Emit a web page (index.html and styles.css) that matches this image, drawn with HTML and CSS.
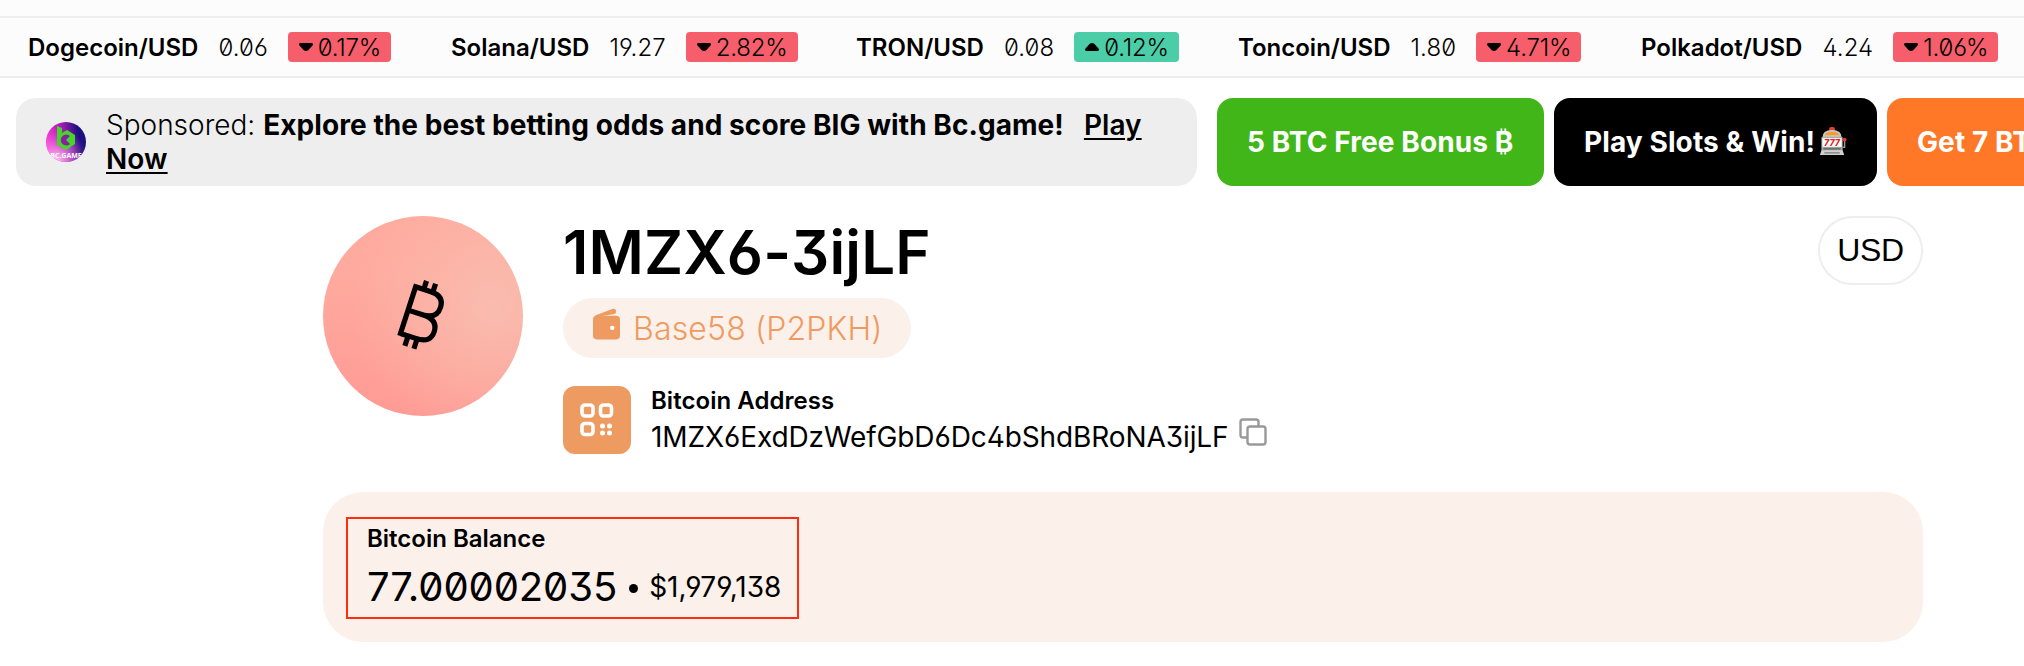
FILE: index.html
```html
<!DOCTYPE html>
<html lang="en">
<head>
<meta charset="utf-8">
<title>Bitcoin Address</title>
<link rel="stylesheet" href="styles.css">
</head>
<body>
<div class="topstrip"></div>
<div class="ticker">
  <div class="pair"><b>Dogecoin/USD</b><span class="price">0.06</span><span class="chg down"><svg viewBox="0 0 14 8"><path d="M2 0h10q3 0 1.500 2.500L9.500 7q-2.500 2-5 0L.5 2.500Q-1 0 2 0z"/></svg>0.17%</span></div>
  <div class="pair"><b>Solana/USD</b><span class="price">19.27</span><span class="chg down"><svg viewBox="0 0 14 8"><path d="M2 0h10q3 0 1.500 2.500L9.500 7q-2.500 2-5 0L.5 2.500Q-1 0 2 0z"/></svg>2.82%</span></div>
  <div class="pair"><b>TRON/USD</b><span class="price">0.08</span><span class="chg up"><svg viewBox="0 0 14 8"><path d="M2 8h10q3 0 1.500-2.500L9.500 1q-2.500-2-5 0L.5 5.500Q-1 8 2 8z"/></svg>0.12%</span></div>
  <div class="pair"><b>Toncoin/USD</b><span class="price">1.80</span><span class="chg down"><svg viewBox="0 0 14 8"><path d="M2 0h10q3 0 1.500 2.500L9.500 7q-2.500 2-5 0L.5 2.500Q-1 0 2 0z"/></svg>4.71%</span></div>
  <div class="pair"><b>Polkadot/USD</b><span class="price">4.24</span><span class="chg down"><svg viewBox="0 0 14 8"><path d="M2 0h10q3 0 1.500 2.500L9.500 7q-2.500 2-5 0L.5 2.500Q-1 0 2 0z"/></svg>1.06%</span></div>
</div>
<div class="promos">
  <div class="sponsor">
    <svg class="bc" viewBox="0 0 40 40">
      <defs>
        <linearGradient id="g" x1="0" y1=".35" x2="1" y2=".2"><stop offset="0" stop-color="#ff2fd6"/><stop offset=".5" stop-color="#8a1aa8"/><stop offset=".8" stop-color="#1d0f80"/></linearGradient>
        <radialGradient id="h" cx=".25" cy=".95" r=".8"><stop offset="0" stop-color="#ffc4f2"/><stop offset="1" stop-color="#e060d8" stop-opacity="0"/></radialGradient>
        <clipPath id="c"><circle cx="20" cy="20" r="20"/></clipPath>
      </defs>
      <g clip-path="url(#c)"><path fill="url(#g)" d="M0 0h40v40H0z"/><path fill="url(#h)" d="M0 0h40v40H0z"/>
      <path fill="#45d62a" d="M11 4l5 2v5l5-3 8 5v9l-9 6-9-5z"/><path fill="#8a1fa6" d="M24 14a5.500 5.500 0 1 0 0 8l-4-4z"/>
      <text class="bct" x="20" y="36" text-anchor="middle">BC.GAME</text></g>
    </svg>
    <p>Sponsored: <b>Explore the best betting odds and score BIG with Bc.game!</b><b class="play"><u>Play Now</u></b></p>
  </div>
  <div class="btn green">5 BTC Free Bonus ₿</div>
  <div class="btn black">Play Slots &amp; Win!
    <svg class="slot" viewBox="0 0 28 30">
      <rect x="10" y="0" width="6" height="5" rx="2" fill="#e2402f"/>
      <path d="M3 11Q3 3 13 3t10 8z" fill="#c9c9c5"/><path d="M5 8.500Q7 5 13 5t8 3.500z" fill="#f59a2d"/>
      <rect x="2" y="10" width="22" height="15" rx="1.500" fill="#a9aaa8"/><rect x="3" y="11.500" width="20" height="9" fill="#fff"/>
      <text class="sevens" x="13" y="19.500" text-anchor="middle">777</text>
      <rect x="4" y="21.500" width="18" height="2" fill="#6e706e"/><path d="M2 24h22l1.500 5H.5z" fill="#cfd0ce"/><path d="M5 26h16v1.500H5z" fill="#888"/>
      <path d="M24 21h2v-8" fill="none" stroke="#999" stroke-width="1.500"/><circle cx="26" cy="13" r="2" fill="#e23b30"/>
    </svg>
  </div>
  <div class="btn orange">Get 7 BTC</div>
</div>
<main>
  <section class="head">
    <div class="avatar">
      <svg viewBox="0 0 60 80"><g transform="rotate(18 30 40)"><path d="M14 12V66M14 14.500H30Q44 14.500 44 26.500T30 39H14M30 39Q45.500 39 45.500 51.500T30 63.500H14M22.500 5.500V14M32 5.500V14M22 64V74M31.500 64V74"/></g></svg>
    </div>
    <div class="info">
      <h1>1MZX6-3ijLF</h1>
      <div class="type">
        <svg viewBox="0 0 28 32"><path d="M3 7L20 .5Q24-.5 24 3.500q0 2-3 2.500L10 7.500H24q4 0 4 4V28q0 4-4 4H4q-4 0-4-4V12Q0 8 3 7z"/><circle cx="20" cy="20" r="2.300" fill="#fff"/></svg>
        <span>Base58 (P2PKH)</span>
      </div>
      <div class="addr">
        <div class="qr"><svg viewBox="0 0 34 34"><g class="sq"><rect x="2" y="2" width="11" height="11" rx="3"/><rect x="20.500" y="2" width="11" height="11" rx="3"/><rect x="2" y="20.500" width="11" height="11" rx="3"/></g><g fill="#fff"><circle cx="22.500" cy="23" r="2.500"/><circle cx="29.500" cy="23" r="2.500"/><circle cx="22.500" cy="30" r="2.500"/><circle cx="29.500" cy="30" r="2.500"/></g></svg></div>
        <div class="lines">
          <b>Bitcoin Address</b>
          <div class="hash"><span>1MZX6ExdDzWefGbD6Dc4bShdBRoNA3ijLF</span><svg viewBox="0 0 28 28"><path d="M8.500 19.500H4q-2.500 0-2.500-2.500V4Q1.500 1.500 4 1.500H17q2.500 0 2.500 2.500V8.500"/><rect x="8.500" y="8.500" width="18" height="18" rx="2.500"/></svg></div>
        </div>
      </div>
    </div>
    <div class="usd">USD</div>
  </section>
  <section class="card">
    <div class="balance">
      <b>Bitcoin Balance</b>
      <div class="amount"><span class="btc">77.00002035</span><i></i><span class="fiat">$1,979,138</span></div>
    </div>
  </section>
</main>
</body>
</html>
```

FILE: styles.css
```css
* { box-sizing: border-box; }
html { overflow: hidden; }
body { margin: 0; width: 2024px; height: 666px; overflow: hidden; background: #fff; color: #000; font-family: Inter, "Liberation Sans", sans-serif; font-feature-settings: "zero", "ss01", "cv09"; }
b { font-weight: 600; }
.topstrip { height: 16px; background: #fcfcfc; }
.ticker { height: 62px; border-top: 2px solid #eee; border-bottom: 2px solid #eee; background: #fcfcfc; display: grid; grid-template-columns: 423px 405px 382px 403px 400px; padding-left: 28px; align-items: center; font-size: 24px; }
.pair { display: flex; align-items: center; white-space: nowrap; height: 30px; }
.price { margin-left: 20px; font-weight: 300; letter-spacing: 0.1px; }
.chg { display: flex; align-items: center; height: 30px; margin-left: 20px; padding: 1px 10px 0 11px; border-radius: 4px; font-weight: 300; letter-spacing: -0.2px; gap: 5px; }
.chg svg { width: 14px; height: 8px; margin-top: -1px; }
.down { background: #f65e6b; }
.up { background: #4bcea8; }
.promos { display: flex; margin-top: 20px; padding-left: 16px; height: 88px; }
.sponsor { flex: none; width: 1181px; background: #eee; border-radius: 20px; display: flex; align-items: center; padding-left: 30px; margin-right: 20px; }
.bc { width: 40px; height: 40px; margin-right: 20px; }
.bct { font-family: "Open Sans", sans-serif; font-size: 7px; font-weight: 700; fill: #fff; }
.sponsor p { margin: 0; width: 1060px; font-size: 28px; line-height: 34px; font-weight: 300; }
.sponsor b { font-weight: 700; letter-spacing: 0.07px; }
.sponsor .play { margin-left: 20px; font-weight: 600; }
.play u { text-decoration-thickness: 2px; text-underline-offset: 3px; }
.btn { flex: none; height: 88px; margin-right: 10px; border-radius: 16px; color: #fff; font-size: 28px; font-weight: 700; letter-spacing: 0.1px; display: flex; align-items: center; padding-left: 30px; white-space: nowrap; }
.green { width: 327px; background: #40b618; }
.black { width: 323px; background: #000; }
.orange { width: 190px; background: #ff7827; }
.slot { width: 28px; height: 29px; margin: -2px 0 0 4px; }
.sevens { font-size: 9px; font-weight: 800; font-style: italic; fill: #e32020; }
main { width: 1600px; margin: 30px 0 0 323px; }
.head { display: flex; height: 276px; }
.avatar { width: 200px; height: 200px; border-radius: 50%; background: radial-gradient(circle at 85% 45%, #f9bcae, rgba(250,180,168,0) 70%), linear-gradient(#ffaa9e 30%, #ff9a94); display: flex; align-items: center; justify-content: center; margin-right: 40px; }
.avatar svg { width: 60px; height: 80px; }
.avatar path { fill: none; stroke: #000; stroke-width: 5.2; }
.info { flex: 1; }
h1 { margin: 0; font-size: 60px; line-height: 72px; height: 82px; font-weight: 600; letter-spacing: 0.2px; }
.type { display: flex; align-items: center; width: 348px; height: 60px; border-radius: 30px; background: #fcf0ea; color: #ee9b61; font-size: 32px; font-weight: 300; letter-spacing: 0.15px; padding-left: 30px; }
.type svg { width: 27px; height: 32px; fill: #ee9b61; margin: -9px 13px 0 0; }
.addr { display: flex; margin-top: 28px; }
.qr { width: 68px; height: 68px; border-radius: 12px; background: #ee9b61; display: flex; align-items: center; justify-content: center; margin-right: 20px; }
.qr svg { width: 34px; height: 34px; }
.sq { fill: none; stroke: #fff; stroke-width: 3.6; }
.lines b { display: block; font-size: 24px; line-height: 30px; height: 33px; letter-spacing: 0.05px; }
.hash { display: flex; font-size: 28px; line-height: 36px; font-weight: 400; letter-spacing: -0.1px; }
.hash svg { width: 28px; height: 28px; margin: -1px 0 0 11px; fill: none; stroke: #999; stroke-width: 2.4; }
.usd { width: 105px; height: 69px; border: 2px solid #eee; border-radius: 35px; font-family: "Liberation Sans", Arial, sans-serif; font-size: 32px; letter-spacing: -0.3px; display: flex; align-items: center; justify-content: center; }
.card { height: 150px; border-radius: 40px; background: #fcf0ea; padding: 25px 0 0 23px; }
.balance { width: 453px; height: 102px; border: 2px solid #ff2d10; padding: 5px 0 0 19px; }
.balance b { display: block; font-size: 24px; line-height: 30px; height: 37px; }
.amount { display: flex; align-items: center; height: 50px; }
.btc { font-size: 40px; font-weight: 400; letter-spacing: -0.1px; }
.amount i { width: 9px; height: 9px; border-radius: 50%; background: #000; margin: 4px 11px 0 12px; }
.fiat { font-size: 28px; font-weight: 400; padding-top: 2px; }
```
